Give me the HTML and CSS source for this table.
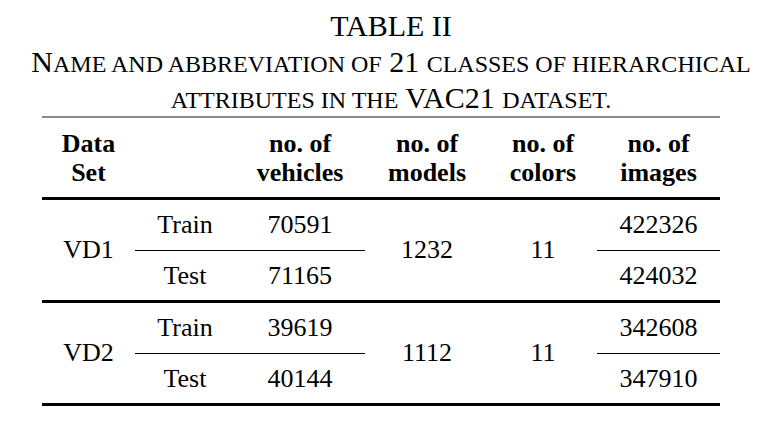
FILE: index.html
```html
<!DOCTYPE html>
<html>
  <head>
    <meta charset="utf-8">
    <title>Table II</title>
    <link rel="stylesheet" href="styles.css">
  </head>
  <body>
    <div class="caption">
      <div class="label">TABLE II</div>
      <div class="title">N<span class="sc">ame and abbreviation of</span> 21 <span class="sc">classes of hierarchical</span></div>
      <div class="title"><span class="sc">attributes in the</span> VAC21 <span class="sc">dataset.</span></div>
    </div>

    <table class="data">
      <colgroup>
        <col class="c-set">
        <col class="c-split">
        <col class="c-veh">
        <col class="c-mod">
        <col class="c-col">
        <col class="c-img">
      </colgroup>
      <thead>
        <tr>
          <th>Data<br>Set</th>
          <th></th>
          <th>no. of<br>vehicles</th>
          <th>no. of<br>models</th>
          <th>no. of<br>colors</th>
          <th>no. of<br>images</th>
        </tr>
      </thead>
      <tbody>
        <tr>
          <td rowspan="2">VD1</td>
          <td class="split">Train</td>
          <td class="split">70591</td>
          <td rowspan="2">1232</td>
          <td rowspan="2">11</td>
          <td class="split">422326</td>
        </tr>
        <tr>
          <td>Test</td>
          <td>71165</td>
          <td>424032</td>
        </tr>
      </tbody>
      <tbody>
        <tr>
          <td rowspan="2">VD2</td>
          <td class="split">Train</td>
          <td class="split">39619</td>
          <td rowspan="2">1112</td>
          <td rowspan="2">11</td>
          <td class="split">342608</td>
        </tr>
        <tr>
          <td>Test</td>
          <td>40144</td>
          <td>347910</td>
        </tr>
      </tbody>
    </table>
  </body>
</html>
```

FILE: styles.css
```css
body {
  margin: 0;
  background: #fff;
  color: #000;
  font-family: "Liberation Serif", "Times New Roman", serif;
}

.caption {
  text-align: center;
  padding-top: 8px;
}
.caption .label,
.caption .title {
  font-size: 30px;
  line-height: 36px;
  white-space: nowrap;
}
.caption .sc {
  font-size: 24px;
  line-height: 1;
  text-transform: uppercase;
}

.data {
  border-collapse: collapse;
  margin: 0 0 0 42px;
  width: 678px;
  table-layout: fixed;
  font-size: 26px;
  border-top: 2px solid #8a8a8a;
  border-bottom: 3px solid #000;
}

.c-set   { width: 93px; }
.c-split { width: 100px; }
.c-veh   { width: 130px; }
.c-mod   { width: 124px; }
.c-col   { width: 108px; }
.c-img   { width: 123px; }

.data th {
  font-weight: bold;
  line-height: 29px;
  height: 79px;
  padding: 0;
  vertical-align: middle;
  border-bottom: 3px solid #000;
}

.data td {
  text-align: center;
  padding: 0;
  height: 25px;
  line-height: 49.5px;
}
.data td.split {
  border-bottom: 1.5px solid #000;
}
.data tbody + tbody {
  border-top: 3px solid #000;
}
```
